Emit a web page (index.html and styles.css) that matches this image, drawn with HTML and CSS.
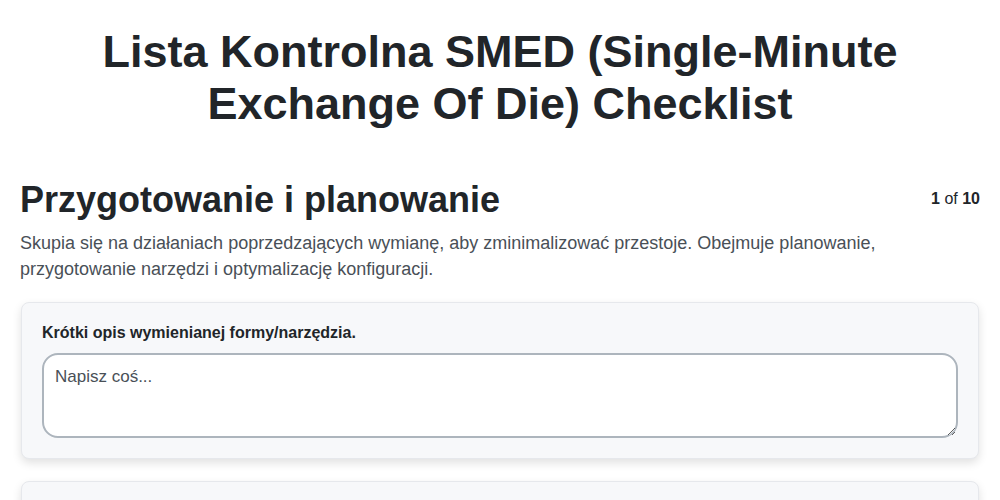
FILE: index.html
```html
<!DOCTYPE html>
<html>
<head>
    <title>Lista Kontrolna SMED</title>
    <link rel="stylesheet" href="styles.css">
</head>
<body>
    <div class="page">
        <h1 class="title">Lista Kontrolna SMED (Single-Minute Exchange Of Die) Checklist</h1>
        <div class="section-head">
            <h2>Przygotowanie i planowanie</h2>
            <div class="counter"><b>1</b> of <b>10</b></div>
        </div>
        <p class="desc">Skupia się na działaniach poprzedzających wymianę, aby zminimalizować przestoje. Obejmuje planowanie, przygotowanie narzędzi i optymalizację konfiguracji.</p>
        <div class="card">
            <label for="q1">Krótki opis wymienianej formy/narzędzia.</label>
            <textarea id="q1" placeholder="Napisz coś..."></textarea>
        </div>
        <div class="card card-empty"></div>
    </div>
</body>
</html>
```

FILE: styles.css
```css
body {
    margin: 0;
    font-family: "Liberation Sans", Arial, sans-serif;
    color: #212529;
    background-color: #fff;
}
.page {
    padding: 0 20px;
}
.title {
    font-size: 45px;
    line-height: 52px;
    text-align: center;
    margin: 26px 60px 48px;
}
.section-head {
    display: flex;
    justify-content: space-between;
    align-items: flex-start;
}
.section-head h2 {
    font-size: 36px;
    line-height: 44px;
    margin: 0;
}
.counter {
    font-size: 16px;
    margin-top: 12px;
}
.desc {
    font-size: 18px;
    line-height: 26px;
    color: #495057;
    margin: 8px 0 20px;
}
.card {
    background-color: #f7f8fa;
    border: 1px solid #e6e8ec;
    border-radius: 8px;
    box-shadow: 0 4px 10px rgba(0, 0, 0, 0.12);
    padding: 21px 20px 20px;
    margin: 0 1px 22px;
}
.card-empty {
    height: 60px;
}
.card label {
    display: block;
    font-size: 16px;
    font-weight: bold;
    margin-bottom: 11px;
}
.card textarea {
    display: block;
    width: 100%;
    box-sizing: border-box;
    height: 85px;
    border: 2px solid #adb5bd;
    border-radius: 16px;
    padding: 12px 11px;
    font-family: "Liberation Sans", Arial, sans-serif;
    font-size: 17px;
    background-color: #fff;
    resize: vertical;
}
.card textarea::placeholder {
    color: #495057;
}
```
